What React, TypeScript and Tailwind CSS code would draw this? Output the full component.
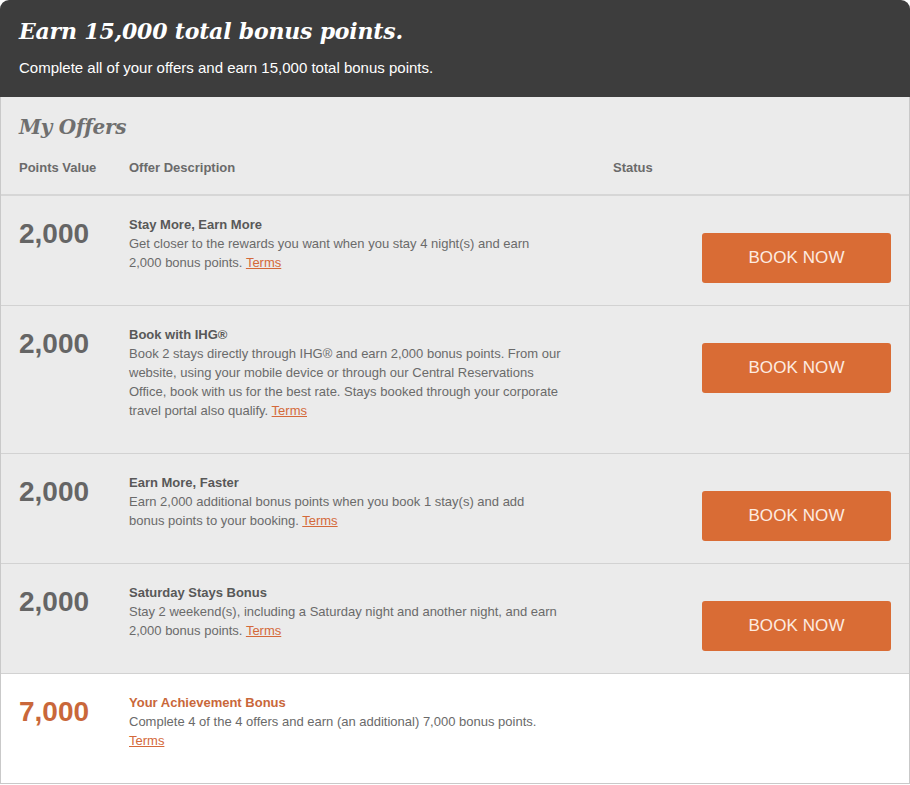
import React from "react";

interface Offer {
    points: string;
    title: string;
    body: string;
    achievement?: boolean;
}

const offers: Offer[] = [
    {
        points: "2,000",
        title: "Stay More, Earn More",
        body: "Get closer to the rewards you want when you stay 4 night(s) and earn 2,000 bonus points.",
    },
    {
        points: "2,000",
        title: "Book with IHG®",
        body: "Book 2 stays directly through IHG® and earn 2,000 bonus points. From our website, using your mobile device or through our Central Reservations Office, book with us for the best rate. Stays booked through your corporate travel portal also qualify.",
    },
    {
        points: "2,000",
        title: "Earn More, Faster",
        body: "Earn 2,000 additional bonus points when you book 1 stay(s) and add bonus points to your booking.",
    },
    {
        points: "2,000",
        title: "Saturday Stays Bonus",
        body: "Stay 2 weekend(s), including a Saturday night and another night, and earn 2,000 bonus points.",
    },
];

const serif = "font-['DejaVu_Serif','Liberation_Serif',serif] font-bold italic";

const OfferRow: React.FC<{ offer: Offer }> = ({ offer }) => {
    const orange = offer.achievement;
    return (
        <div className={`flex items-start pt-[19px] border-b border-[#d2d2d2] ${orange ? "bg-white border-b-0" : ""}`}>
            <div className={`w-[128px] pl-[18px] mt-[5px] text-[28px] leading-[28px] font-bold ${orange ? "text-[#c9673a]" : "text-[#656565]"}`}>
                {offer.points}
            </div>
            <div className="w-[433px] pb-[33px] text-[13px] leading-[19px] text-[#6a6a6a]">
                <div className={`font-bold ${orange ? "text-[#c9673a]" : "text-[#585858]"}`}>{offer.title}</div>
                <div>
                    {offer.body}{" "}
                    <a href="#" className="text-[#d4693a] underline">Terms</a>
                </div>
            </div>
            {!orange && (
                <button className="ml-auto mr-[18px] mt-[18px] mb-[22px] w-[189px] h-[50px] rounded-[3px] bg-[#d96c35] text-[#fdebe0] text-[17px] tracking-[0.1px]">
                    BOOK NOW
                </button>
            )}
        </div>
    );
};

export default function App() {
    return (
        <div className="w-[910px] bg-white font-['Liberation_Sans',Arial,sans-serif]">
            <div className="bg-[#3d3d3d] rounded-t-[9px] pl-[19px] pt-[16px] pb-[19px] text-white">
                <h1 className={`${serif} text-[22px] leading-[30px] tracking-[-0.2px]`}>Earn 15,000 total bonus points.</h1>
                <p className="mt-[12px] text-[15px] leading-[20px]">Complete all of your offers and earn 15,000 total bonus points.</p>
            </div>
            <div className="border-x border-b border-[#c9c9c9] bg-[#ebebeb]">
                <div className="pt-[15px] pb-[17px] border-b-2 border-[#d6d6d6]">
                    <h2 className={`${serif} pl-[18px] text-[20px] leading-[30px] tracking-[-0.3px] text-[#6f6f6f]`}>My Offers</h2>
                    <div className="mt-[16px] flex text-[13px] leading-[19px] font-bold text-[#6a6a6a]">
                        <div className="w-[128px] pl-[18px]">Points Value</div>
                        <div className="w-[484px]">Offer Description</div>
                        <div>Status</div>
                    </div>
                </div>
                {offers.map((o, i) => (
                    <OfferRow key={i} offer={o} />
                ))}
                <OfferRow
                    offer={{
                        points: "7,000",
                        title: "Your Achievement Bonus",
                        body: "Complete 4 of the 4 offers and earn (an additional) 7,000 bonus points.",
                        achievement: true,
                    }}
                />
            </div>
        </div>
    );
}
